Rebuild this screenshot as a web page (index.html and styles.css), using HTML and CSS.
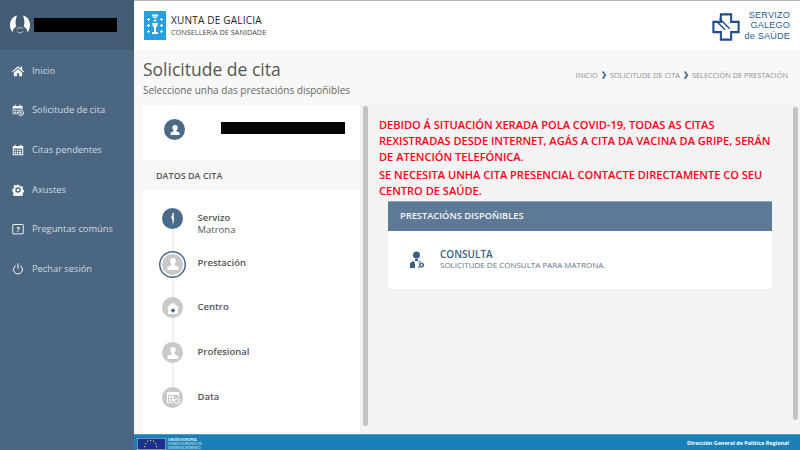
FILE: index.html
```html
<!DOCTYPE html>
<html lang="gl">
<head>
<meta charset="utf-8">
<title>Solicitude de cita</title>
<link rel="stylesheet" href="styles.css">
</head>
<body>
<div class="app">
  <aside class="sidebar">
    <div class="profile">
      <svg class="avatar" viewBox="0 0 20 20"><path fill="#fff" d="M7 .4C3 1.300 0 5 0 10c0 3 1 5.500 2.500 7.300C3 14 4.500 12.500 6.500 11.500 5 9.500 5.500 4 7 .4ZM13 .4c1.500 3.600 2 9.100.5 11.100 2 1 3.500 2.500 4 5.800C19 15.500 20 13 20 10c0-5-3-8.700-7-9.600Z"/><path fill="none" stroke="#c5d0da" stroke-width=".9" d="M7 14.500a3.600 3.600 0 0 1 6-.6M13.300 16a3.600 3.600 0 0 1-6 .6"/></svg>
      <div class="redact-name"></div>
    </div>
    <nav class="menu">
      <a class="menu-item"><svg class="mi" viewBox="0 0 16 16"><path fill="#fff" d="M8 1.500 0 8.500l1 1.200L8 3.700l7 6 1-1.200-2.500-2.200V2h-2v2.600ZM2.500 10.200V15h4v-4h3v4h4v-4.800L8 5.400Z"/></svg><span>Inicio</span></a>
      <a class="menu-item"><svg class="mi" viewBox="0 0 16 16"><path fill="#fff" fill-rule="evenodd" d="M1 2.500h2.500V1H5v1.500h5V1h1.500v1.500H14V8h-1V6H2v6.500h5.500v1H1ZM3.500 7.500h2v1.800h-2Zm3 0h2v1.800h-2Zm3 0h2v1h-2Zm-6 2.800h2V12h-2Zm3 0h1.500V12H6.500Z"/><circle cx="12" cy="12" r="3.300" fill="none" stroke="#fff" stroke-width="1.200"/><path stroke="#fff" d="M12 10.500v3M10.500 12h3"/></svg><span>Solicitude de cita</span></a>
      <a class="menu-item"><svg class="mi" viewBox="0 0 16 16"><path fill="#fff" fill-rule="evenodd" d="M1 2.500h2.500V1H5v1.500h6V1h1.500v1.500H15V15H1ZM2.300 6v7.700h11.400V6Z"/><path fill="#fff" d="M3.500 7.500h2v2h-2Zm3 0h2v2h-2Zm3 0h2.800v2H9.500Zm-6 3h2v2h-2Zm3 0h2v2h-2Zm3 0h2.800v2H9.500Z"/></svg><span>Citas pendentes</span></a>
      <a class="menu-item"><svg class="mi" viewBox="0 0 16 16"><path fill="#fff" fill-rule="evenodd" d="M6.500 1h3l.4 1.800 1.300.6 1.700-.9 2 2.100-1 1.600.6 1.300 1.800.5v3l-1.800.4-.6 1.300 1 1.700-2.100 2-1.600-1-1.300.6-.4 1.800h-3l-.4-1.800-1.300-.6-1.600 1-2.100-2 1-1.700-.6-1.300L.5 9.500v-3l1.800-.5.6-1.300-1-1.600 2.100-2.100 1.600.9 1.300-.6ZM8 4.300a3.700 3.700 0 1 0 0 7.400 3.700 3.700 0 0 0 0-7.400Z"/><circle cx="8" cy="8" r="1.800" fill="#fff"/></svg><span>Axustes</span></a>
      <a class="menu-item"><svg class="mi" viewBox="0 0 16 16"><rect x="1" y="2" width="14" height="12.500" rx=".5" fill="none" stroke="#fff" stroke-width="1.200"/><text x="8" y="11.700" class="qm">?</text></svg><span>Preguntas comúns</span></a>
      <a class="menu-item"><svg class="mi" viewBox="0 0 16 16"><path fill="none" stroke="#fff" stroke-width="1.300" stroke-linecap="round" d="M4.800 3.500a6 6 0 1 0 6.400 0M8 1v6"/></svg><span>Pechar sesión</span></a>
    </nav>
  </aside>
  <div class="main">
    <header class="topbar">
      <div class="xunta">
        <svg class="shield" viewBox="0 0 22 29"><rect width="22" height="29" fill="#2a9fdf"/><path fill="#fff" d="M8 3.500h6v2H8ZM9 6h4v1H9ZM8 12h6l-1 4h-1v5h2v2H8v-2h2v-5H9Z"/><path fill="#fff" d="M4 7h1v1h1v1H5v1H4V9H3V8h1Zm13 0h1v1h1v1h-1v1h-1V9h-1V8h1ZM4 13h1v1h1v1H5v1H4v-1H3v-1h1Zm13 0h1v1h1v1h-1v1h-1v-1h-1v-1h1ZM4 19h1v1h1v1H5v1H4v-1H3v-1h1Zm13 0h1v1h1v1h-1v1h-1v-1h-1v-1h1ZM10.500 8h1v1h1v1h-1v1h-1v-1h-1V9h1Z"/></svg>
        <div class="xunta-text">
          <div class="xunta-name">XUNTA DE GALICIA</div>
          <div class="xunta-sub">CONSELLERÍA DE SANIDADE</div>
        </div>
      </div>
      <div class="sergas">
        <svg class="cross" viewBox="0 0 30 30"><path fill="none" stroke="#1f4e8a" stroke-width="2.200" d="M9.500 1.500h11v8h8v11h-8v8h-11v-8h-8v-11h8Z"/><path stroke="#1f4e8a" stroke-width="1.500" d="m8 6 11 11M5 9l9 9"/></svg>
        <div class="sergas-text"><div>SERVIZO</div><div>GALEGO</div><div>de SAÚDE</div></div>
      </div>
    </header>
    <section class="titlebar">
      <div>
        <h1 class="page-title">Solicitude de cita</h1>
        <p class="page-sub">Seleccione unha das prestacións dispoñibles</p>
      </div>
      <div class="crumbs">
        <span>INICIO</span><b class="sep">❯</b><span>SOLICITUDE DE CITA</span><b class="sep">❯</b><span>SELECCIÓN DE PRESTACIÓN</span>
      </div>
    </section>
    <section class="content">
      <div class="left">
        <div class="patient">
          <div class="patient-icon"><svg viewBox="0 0 12 12"><path fill="#fff" d="M6 1a2.600 2.600 0 0 0-2.600 2.800c0 1.100.5 2 1.200 2.500v1L1.500 8.500V11h9V8.500l-3.100-1.200v-1c.7-.5 1.200-1.400 1.200-2.500A2.600 2.600 0 0 0 6 1Z"/></svg></div>
          <div class="redact-patient"></div>
        </div>
        <div class="datos">DATOS DA CITA</div>
        <div class="steps">
          <div class="step">
            <div class="dot active"><svg viewBox="0 0 20 20"><path fill="#fff" d="M10 3.500c1.200.3 1.200 1.700.6 2.500-.2 1.500.6 2.500.4 4-.2 1.700-.5 3.500-1 6-.5-1.500-.5-3.500-.5-5.500C8.500 9.500 8 8 8.500 7c.5-.5 1-.5 1-1.200-.3-.8 0-1.800.5-2.300Z"/></svg></div>
            <div class="step-text"><strong>Servizo</strong><span>Matrona</span></div>
          </div>
          <div class="step">
            <div class="dot current"><svg viewBox="0 0 20 20"><path fill="#fff" d="M10 4a2.800 2.800 0 0 0-2.800 3c0 1.200.5 2.200 1.300 2.800v1.400L4.500 13v3h11v-3l-4-1.800V9.800c.8-.6 1.300-1.600 1.300-2.800A2.800 2.800 0 0 0 10 4Z"/></svg></div>
            <div class="step-text"><strong>Prestación</strong></div>
          </div>
          <div class="step">
            <div class="dot"><svg viewBox="0 0 20 20"><path fill="#fff" d="M10 4.500 3.500 10H5v6h10v-6h1.500Z"/><path fill="#2d5275" d="M9.300 10.500h1.400v1.300H12v1.400h-1.300v1.300H9.300v-1.300H8v-1.400h1.300Z"/></svg></div>
            <div class="step-text"><strong>Centro</strong></div>
          </div>
          <div class="step">
            <div class="dot"><svg viewBox="0 0 20 20"><path fill="#fff" d="M10 4a2.800 2.800 0 0 0-2.800 3c0 1.200.5 2.200 1.300 2.800v1.400L4.500 13v3h11v-3l-4-1.800V9.800c.8-.6 1.300-1.600 1.300-2.800A2.800 2.800 0 0 0 10 4Z"/></svg></div>
            <div class="step-text"><strong>Profesional</strong></div>
          </div>
          <div class="step">
            <div class="dot"><svg viewBox="0 0 20 20"><path fill="#fff" fill-rule="evenodd" d="M4 5h12v5h-1V8H5v7h5v1H4Z"/><path fill="#fff" d="M6 9h2v2H6Zm3 0h2v2H9Zm-3 3h2v2H6Zm3 0h2v2H9Z"/><circle cx="14" cy="14" r="2.500" fill="none" stroke="#fff"/></svg></div>
            <div class="step-text"><strong>Data</strong></div>
          </div>
        </div>
      </div>
      <div class="scroll-track"><div class="scroll-thumb"></div></div>
      <div class="right">
        <div class="notice">
          <p>DEBIDO Á SITUACIÓN XERADA POLA COVID-19, TODAS AS CITAS REXISTRADAS DESDE INTERNET, AGÁS A CITA DA VACINA DA GRIPE, SERÁN DE ATENCIÓN TELEFÓNICA.</p>
          <p>SE NECESITA UNHA CITA PRESENCIAL CONTACTE DIRECTAMENTE CO SEU CENTRO DE SAÚDE.</p>
        </div>
        <div class="card">
          <div class="card-head">PRESTACIÓNS DISPOÑIBLES</div>
          <div class="card-body">
            <svg class="doc" viewBox="0 0 16 18"><circle cx="7.500" cy="4" r="3.500" fill="#3f5f80"/><path fill="#3f5f80" d="M6 8h3v2H6ZM1 17v-4c0-1.500 1.500-2.500 4-3l1 3v4Zm8 0v-4l1-3c1 .2 2 .5 2.800 1H12a3 3 0 0 0 0 6Z"/><circle cx="12.500" cy="14" r="2.500" fill="#3f5f80"/><path stroke="#fff" stroke-width=".8" d="M11.200 14h2.600M12.500 12.700v2.600"/></svg>
            <div class="service">
              <div class="service-name">CONSULTA</div>
              <div class="service-desc">SOLICITUDE DE CONSULTA PARA MATRONA.</div>
            </div>
          </div>
        </div>
      </div>
      <div class="scroll-track slim"><div class="scroll-thumb"></div></div>
    </section>
    <footer class="footer">
      <div class="eu">
        <svg class="flag" viewBox="0 0 29 12"><rect width="29" height="12" fill="#1f2f8f" stroke="#cfe3f0" stroke-width="1"/><g fill="#d8c94a"><rect x="13" y="2" width="1.200" height="1.200"/><rect x="16" y="2.500" width="1.200" height="1.200"/><rect x="10" y="2.500" width="1.200" height="1.200"/><rect x="8" y="5" width="1.200" height="1.200"/><rect x="18" y="5" width="1.200" height="1.200"/><rect x="7" y="8" width="1.200" height="1.200"/><rect x="19" y="8" width="1.200" height="1.200"/></g></svg>
        <div class="eu-text"><b>UNIÓN EUROPEA</b><span>FONDO EUROPEO DE</span><span>DESENVOLVEMENTO</span></div>
      </div>
      <div class="dg">Dirección General de Política Regional</div>
    </footer>
  </div>
</div>
</body>
</html>
```

FILE: styles.css
```css
* { box-sizing: border-box; }
html, body { margin: 0; height: 100%; overflow: hidden; }
body { font-family: "Open Sans", "Liberation Sans", sans-serif; color: #555; background: #fff; }
.app { display: flex; width: 800px; height: 450px; }

.sidebar { width: 134px; flex: none; background: #4a6680; display: flex; flex-direction: column; }
.profile { height: 50px; background: #435c74; display: flex; align-items: center; padding-left: 10px; gap: 4px; }
.avatar { width: 20px; height: 20px; display: block; flex: none; }
.redact-name { width: 83px; height: 14px; background: #000; }
.menu { display: flex; flex-direction: column; padding-top: .7px; }
.menu-item { height: 39.700px; display: flex; align-items: center; padding-left: 12px; gap: 8px; color: #d4dbe2; font-size: 9.300px; line-height: 14px; }
.mi { width: 12px; height: 12px; flex: none; display: block; }
.qm { font: 700 9px "Open Sans", sans-serif; fill: #fff; text-anchor: middle; }

.main { flex: 1; min-width: 0; display: flex; flex-direction: column; }
.topbar { height: 50px; flex: none; background: #fff; border-top: 1px solid #b5b5b5; display: flex; justify-content: space-between; align-items: center; padding: 0 10px 0 10px; }
.xunta { display: flex; align-items: center; gap: 5px; }
.shield { width: 22px; height: 29px; display: block; }
.xunta-name { font-size: 10px; line-height: 12px; color: #222; letter-spacing: .2px; }
.xunta-sub { font-size: 7.300px; line-height: 10px; color: #444; margin-top: 1px; }
.sergas { display: flex; align-items: center; gap: 4px; }
.cross { width: 28px; height: 28px; display: block; margin-top: 3px; }
.sergas-text { font-family: "Liberation Sans", sans-serif; font-size: 9.100px; line-height: 10.500px; letter-spacing: .2px; color: #2a5c96; text-align: right; }

.titlebar { height: 55px; flex: none; background: #f8f8f8; display: flex; justify-content: space-between; padding: 6px 12px 0 9px; }
.page-title { margin: 0; font-size: 17.500px; line-height: 26px; font-weight: 400; color: #555; }
.page-sub { margin: 1px 0 0; font-size: 10px; line-height: 14px; color: #666; }
.crumbs { display: flex; align-items: center; gap: 2px; height: 25px; margin-top: 6px; font-size: 7.400px; color: #8a8f95; }
.sep { color: #3f6285; font-size: 7px; font-weight: 700; padding: 0 1px; }

.content { flex: 1; min-height: 0; display: flex; background: #f3f3f3; }
.left { width: 226px; flex: none; background: #fff; padding-left: 9px; box-shadow: inset 9px 0 0 #f8f8f8; padding-top: 1px; }
.patient { height: 54px; display: flex; align-items: flex-start; padding: 13px 0 0 21px; gap: 36px; }
.patient-icon { width: 21px; height: 21px; border-radius: 50%; background: #4a6a88; display: flex; align-items: center; justify-content: center; }
.patient-icon svg { width: 12px; height: 12px; display: block; }
.redact-patient { width: 124px; height: 12px; margin-top: 3px; background: #000; }
.datos { height: 30px; background: #f7f7f7; font-size: 9px; font-weight: 600; line-height: 31px; padding-left: 13px; color: #555; }

.steps { padding: 18px 0 0 19px; }
.step { height: 44.700px; display: flex; gap: 14.500px; position: relative; }
.step:not(:last-child)::before { content: ""; position: absolute; left: 9.500px; top: 20px; width: 2px; height: 30px; background: #f0f0f0; }
.dot { width: 21px; height: 21px; border-radius: 50%; background: #c9c9c9; flex: none; position: relative; display: flex; align-items: center; justify-content: center; }
.dot svg { width: 20px; height: 20px; display: block; }
.dot.active { background: #496a89; }
.dot.current { top: 1px; box-shadow: 0 0 0 1.500px #fff, 0 0 0 3px #496a89; }
.step-text { display: flex; flex-direction: column; padding-top: 4px; font-size: 9.500px; line-height: 12px; color: #555; }
.step-text strong { font-weight: 600; }

.scroll-track { width: 9px; flex: none; background: #f3f3f3; padding: 1px 1.500px 8px 2.500px; }
.scroll-thumb { width: 5px; height: 100%; border-radius: 3px; background: #c4c4c4; }
.scroll-track.slim { width: 7px; padding: 2px 2px 14px 0; }

.right { flex: 1; min-width: 0; padding: 12px 0 0 10px; }
.notice { color: #ff0019; font-size: 11.050px; font-weight: 600; line-height: 16px; padding-right: 14px; }
.notice p { margin: 0 0 1.500px; }
.card { margin: 2px 21px 0 9px; }
.card-head { height: 30px; background: #5c7995; border-top: 1px solid #8ea4b8; color: #f4f6f8; font-size: 9.300px; font-weight: 600; line-height: 28px; padding-left: 12px; }
.card-body { height: 58px; background: #fff; display: flex; align-items: center; padding: 0 0 1px 21px; gap: 15px; }
.doc { width: 16px; height: 18px; display: block; margin-top: 2px; }
.service-name { font-size: 10px; font-weight: 600; line-height: 12.500px; color: #42607e; }
.service-desc { font-size: 8px; line-height: 10px; color: #5f7488; }

.footer { height: 16px; flex: none; background: #1a80b5; display: flex; justify-content: space-between; align-items: center; border-top: 1px solid #4a9ec9; padding: 0 11px 0 3px; color: #fff; overflow: hidden; }
.eu { display: flex; gap: 2px; align-items: flex-start; height: 15px; }
.flag { width: 29px; height: 12px; display: block; margin-top: 3px; flex: none; }
.eu-text { display: flex; flex-direction: column; font-size: 3.400px; line-height: 3.800px; padding-top: 3px; color: #e6f2f8; }
.dg { font-size: 5.400px; font-weight: 700; }
```
